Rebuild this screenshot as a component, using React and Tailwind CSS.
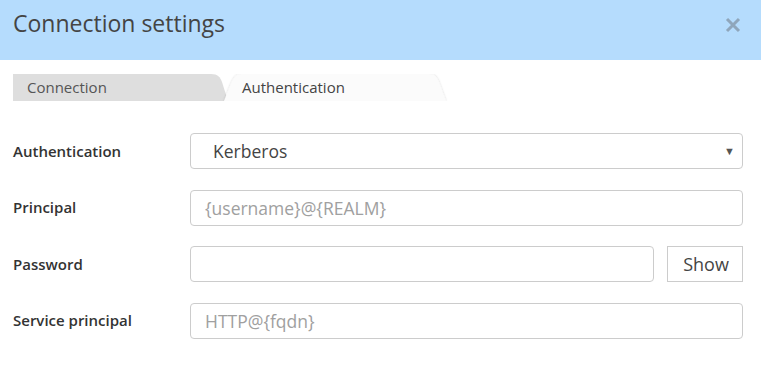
import React from 'react';

const font = { fontFamily: '"Open Sans", "Noto Sans", sans-serif' };

const Field = ({ label, children }) => (
  <div className="flex items-center h-[36px]">
    <label className="w-[177px] shrink-0 text-[15px] font-semibold text-[#333]">{label}</label>
    <div className="flex-1 flex items-center gap-[13px] h-full">{children}</div>
  </div>
);

const TextInput = ({ placeholder, type = 'text' }) => (
  <input
    type={type}
    placeholder={placeholder}
    className="flex-1 h-full min-w-0 border border-[#ccc] rounded-[4px] px-[14px] text-[17.5px] text-[#444] placeholder:text-[#a0a0a0] outline-none bg-white"
  />
);

const App = () => {
  return (
    <div className="w-[761px] h-[365px] bg-white overflow-hidden" style={font}>
      {/* header */}
      <div className="h-[60px] bg-[#b5dcfd] flex items-start justify-between pl-[13px] pr-[20px]">
        <h1 className="pt-[8px] text-[23px] leading-[30px] text-[#444]">Connection settings</h1>
        <svg width="16" height="16" viewBox="0 0 16 16" className="mt-[17px]">
          <path d="M2 2 L14 14 M14 2 L2 14" stroke="#8fa6bb" strokeWidth="3" />
        </svg>
      </div>

      {/* tabs */}
      <div className="relative mt-[14px] ml-[13px] w-[440px] h-[27px] flex items-center text-[15px]">
        <svg width="440" height="27" viewBox="0 0 440 27" className="absolute left-0 top-0">
          <defs>
            <filter id="sh" x="-5%" y="-20%" width="110%" height="140%">
              <feDropShadow dx="0" dy="0" stdDeviation="1.2" floodColor="#000" floodOpacity="0.18" />
            </filter>
          </defs>
          <path d="M0 27 V0 H198 C205 0 207 3 209 8 L215 27 Z" fill="#dedede" />
          <path
            d="M211 27 C214 20 218 8 221 4 C223 1 225 0 229 0 H416 C422 0 424 3 426 8 L433 27 Z"
            fill="#fbfbfb"
            filter="url(#sh)"
          />
        </svg>
        <span className="relative pl-[14px] w-[229px] text-[#555]">Connection</span>
        <span className="relative text-[#444]">Authentication</span>
      </div>

      {/* form */}
      <div className="mt-[32px] pl-[13px] pr-[18px] flex flex-col gap-[20.5px]">
        <Field label="Authentication">
          <div className="flex-1 h-full border border-[#ccc] rounded-[4px] flex items-center justify-between pl-[22px] pr-[7px] text-[17.5px] text-[#444]">
            <span>Kerberos</span>
            <span className="text-[11px] text-[#555]">▼</span>
          </div>
        </Field>
        <Field label="Principal">
          <TextInput placeholder="{username}@{REALM}" />
        </Field>
        <Field label="Password">
          <TextInput type="password" />
          <button className="w-[76px] h-full border border-[#ccc] bg-white text-[18px] text-[#444] pl-[2px]">Show</button>
        </Field>
        <Field label="Service principal">
          <TextInput placeholder="HTTP@{fqdn}" />
        </Field>
      </div>
    </div>
  );
};

export default App;
